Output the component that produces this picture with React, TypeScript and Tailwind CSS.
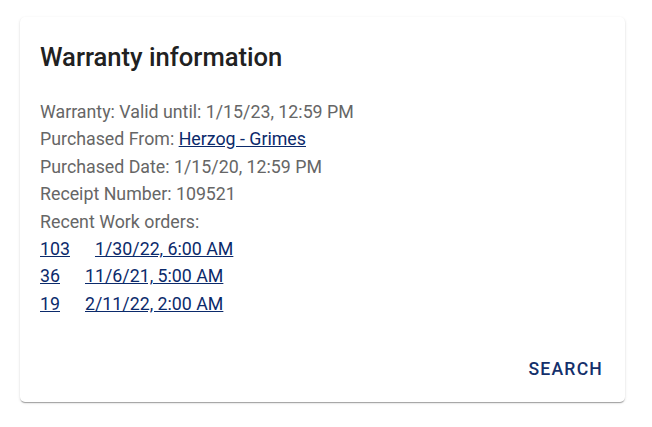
import React from 'react'

export default function App() {
  const orders = [
    { id: '103', date: '1/30/22, 6:00 AM' },
    { id: '36', date: '11/6/21, 5:00 AM' },
    { id: '19', date: '2/11/22, 2:00 AM' },
  ]

  return (
    <div className="min-h-[427px] w-[652px] bg-white pl-[20px] pt-[17px] font-['Roboto',sans-serif]">
      <div className="flex h-[385px] w-[605px] flex-col rounded-[5px] bg-white shadow-[0_2px_1px_-1px_rgba(0,0,0,0.2),0_1px_1px_0_rgba(0,0,0,0.14),0_1px_3px_0_rgba(0,0,0,0.12)]">
        <div className="px-[20px] pt-[23px]">
          <h2 className="text-[25.6px] leading-[34px] font-medium text-[#212121]">Warranty information</h2>
          <div className="mt-[24px] text-[17.8px] leading-[27.4px] text-[#666666]">
            <div>Warranty: Valid until: 1/15/23, 12:59 PM</div>
            <div>
              Purchased From:{' '}
              <a href="#" className="text-[#0b2a6b] underline">Herzog - Grimes</a>
            </div>
            <div>Purchased Date: 1/15/20, 12:59 PM</div>
            <div>Receipt Number: 109521</div>
            <div>Recent Work orders:</div>
            {orders.map((o) => (
              <div key={o.id} className="flex gap-[25px]">
                <a href="#" className="text-[#0b2a6b] underline">{o.id}</a>
                <a href="#" className="text-[#0b2a6b] underline">{o.date}</a>
              </div>
            ))}
          </div>
        </div>
        <div className="mt-auto flex justify-end pr-[22px] pb-[21px]">
          <button className="text-[17.6px] leading-[24px] font-medium tracking-[1.2px] text-[#14306b] uppercase">
            Search
          </button>
        </div>
      </div>
    </div>
  )
}
